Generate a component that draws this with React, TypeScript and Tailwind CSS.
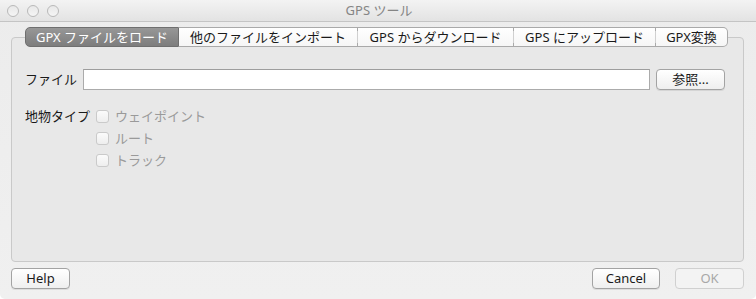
import React from "react";

const font = { fontFamily: '"Noto Sans", "Noto Sans CJK JP", sans-serif' };

function Tab({ label, w, selected, first, last }: { label: string; w: number; selected?: boolean; first?: boolean; last?: boolean }) {
  return (
    <div
      style={{ width: w }}
      className={
        "h-full flex items-center justify-center text-[13px] leading-none " +
        (selected
          ? "bg-gradient-to-b from-[#979797] to-[#7d7d7d] text-white border border-[#6f6f6f] "
          : "bg-gradient-to-b from-[#ffffff] to-[#f6f6f6] text-[#1a1a1a] border-y border-[#a9a9a9] ") +
        (first ? "rounded-l-[5px] " : "") +
        (last ? "rounded-r-[5px] border-r " : "")
      }
    >
      {label}
    </div>
  );
}

function Sep() {
  return <div className="w-px h-full bg-[#a9a9a9] flex items-center"><div className="w-px h-[12px] bg-[#d0d0d0] mx-auto" /></div>;
}

function Checkbox({ label }: { label: string }) {
  return (
    <div className="flex items-center h-[22px] gap-[6px]">
      <div className="w-[13px] h-[13px] rounded-[3px] border border-[#cacaca] bg-gradient-to-b from-[#fbfbfb] to-[#eeeeee]" />
      <span className="text-[13px] text-[#9a9a9a] leading-none">{label}</span>
    </div>
  );
}

function Btn({ label, w, disabled }: { label: string; w: number; disabled?: boolean }) {
  return (
    <div
      style={{ width: w }}
      className={
        "h-[21px] rounded-[4px] border flex items-center justify-center text-[13px] leading-none " +
        (disabled
          ? "border-[#d0d0d0] bg-[#f3f3f3] text-[#a8a8a8]"
          : "border-[#a3a3a3] bg-gradient-to-b from-[#ffffff] to-[#efefef] text-[#1a1a1a] shadow-[0_1px_0_rgba(0,0,0,0.08)]")
      }
    >
      {label}
    </div>
  );
}

export default function App() {
  return (
    <div style={font} className="w-[756px] h-[299px] bg-gradient-to-b from-[#ececec] to-[#f0f0f0] flex flex-col overflow-hidden rounded-b-[5px]">
      {/* Title bar */}
      <div className="h-[22px] shrink-0 bg-gradient-to-b from-[#f3f3f3] to-[#e3e3e3] border-b border-[#c4c4c4] flex items-center relative">
        <div className="flex items-center gap-[8px] pl-[7px]">
          {[0, 1, 2].map((i) => (
            <div key={i} className="w-[12px] h-[12px] rounded-full border border-[#b9b9b9] bg-gradient-to-b from-[#e8e8e8] to-[#f5f5f5]" />
          ))}
        </div>
        <div className="flex-1 text-center text-[13px] text-[#858585] leading-none -ml-[57px]">GPS ツール</div>
      </div>

      <div className="flex flex-col pl-[11px] pr-[12px] pt-[5px]">
        {/* Tabs */}
        <div className="relative z-10 flex h-[20px] ml-[14px] -mb-[10px]">
          <Tab label="GPX ファイルをロード" w={154} selected first />
          <Tab label="他のファイルをインポート" w={178} />
          <Sep />
          <Tab label="GPS からダウンロード" w={155} />
          <Sep />
          <Tab label="GPS にアップロード" w={141} />
          <Sep />
          <Tab label="GPX変換" w={72} last />
        </div>

        {/* Pane */}
        <div className="h-[225px] border border-[#c9c9c9] rounded-[4px] bg-[#e8e8e8] pt-[30px] pl-[13px] pr-[18px]">
          <div className="flex items-center h-[22px]">
            <span className="text-[13px] text-[#1a1a1a] leading-none w-[58px]">ファイル</span>
            <div className="flex-1 h-[21px] bg-white border border-[#ababab] border-t-[#9d9d9d]" />
            <div className="ml-[6px]">
              <Btn label="参照..." w={69} />
            </div>
          </div>
          <div className="flex mt-[15px]">
            <span className="text-[13px] text-[#1a1a1a] leading-none w-[71px] h-[22px] flex items-center">地物タイプ</span>
            <div className="flex flex-col">
              <Checkbox label="ウェイポイント" />
              <Checkbox label="ルート" />
              <Checkbox label="トラック" />
            </div>
          </div>
        </div>

        {/* Bottom buttons */}
        <div className="flex items-center mt-[6px]">
          <Btn label="Help" w={59} />
          <div className="flex-1" />
          <Btn label="Cancel" w={68} />
          <div className="w-[15px]" />
          <Btn label="OK" w={69} disabled />
        </div>
      </div>
    </div>
  );
}
